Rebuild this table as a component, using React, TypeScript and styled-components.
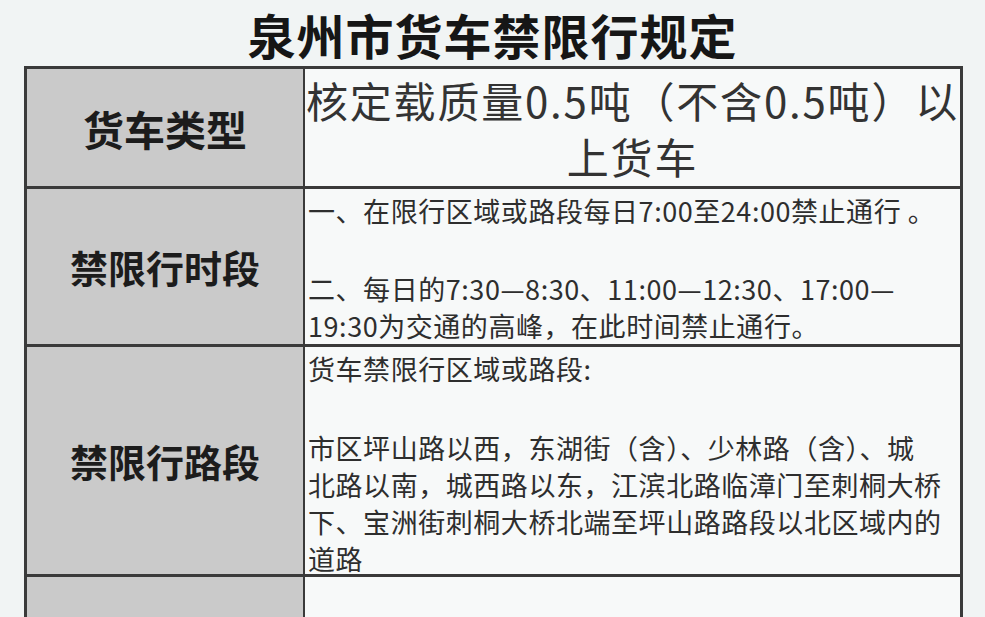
import React from "react";
import styled, { createGlobalStyle } from "styled-components";

const GlobalStyle = createGlobalStyle`
  html, body {
    margin: 0;
    padding: 0;
    background: #f1f4f4;
    overflow: hidden;
  }
  body {
    font-family: "Noto Sans CJK SC", "Noto Sans", sans-serif;
  }
`;

const Page = styled.div`
  width: 985px;
  height: 617px;
  overflow: hidden;
`;

const Title = styled.h1`
  margin: 0;
  padding-top: 4px;
  height: 62px;
  line-height: 60px;
  text-align: center;
  font-size: 48px;
  font-weight: 700;
  color: #161616;
  letter-spacing: 1px;
`;

const Table = styled.div`
  margin-left: 24px;
  width: 939px;
  border: 3px solid #3a3a3a;
  border-bottom: none;
  box-sizing: border-box;
  display: grid;
  grid-template-columns: 278px minmax(0, 1fr);
`;

const Label = styled.div<{ $h: number; $size?: number }>`
  height: ${({ $h }) => $h}px;
  box-sizing: border-box;
  background: #cacaca;
  border-right: 2px solid #3a3a3a;
  border-bottom: 3px solid #3a3a3a;
  display: flex;
  align-items: center;
  justify-content: center;
  font-size: ${({ $size }) => $size ?? 38}px;
  font-weight: 700;
  color: #1c1c1c;
`;

const Cell = styled.div<{ $h: number }>`
  height: ${({ $h }) => $h}px;
  min-width: 0;
  overflow: hidden;
  box-sizing: border-box;
  background: #f7f9f9;
  border-bottom: 3px solid #3a3a3a;
  padding: 3px 4px 0 3px;
  font-size: 27px;
  line-height: 37px;
  letter-spacing: 0.55px;
  color: #2e2e2e;
  white-space: nowrap;
`;

const BigCell = styled(Cell)`
  display: flex;
  align-items: center;
  justify-content: center;
  text-align: center;
  padding: 0 2px;
  font-size: 42px;
  line-height: 56px;
  letter-spacing: 1.8px;
  color: #333;
`;

const Para = styled.p<{ $gap?: number }>`
  margin: 0 0 ${({ $gap }) => $gap ?? 0}px;
`;

export default function App() {
  return (
    <Page>
      <GlobalStyle />
      <Title>泉州市货车禁限行规定</Title>
      <Table>
        <Label $h={120} $size={41}>货车类型</Label>
        <BigCell $h={120}>
          <div>
            核定载质量0.5吨（不含0.5吨）以
            <br />
            上货车
          </div>
        </BigCell>

        <Label $h={158}>禁限行时段</Label>
        <Cell $h={158}>
          <Para $gap={41}>一、在限行区域或路段每日7:00至24:00禁止通行 。</Para>
          <Para>
            二、每日的7:30—8:30、11:00—12:30、17:00—
            <br />
            19:30为交通的高峰，在此时间禁止通行。
          </Para>
        </Cell>

        <Label $h={230}>禁限行路段</Label>
        <Cell $h={230}>
          <Para $gap={42}>货车禁限行区域或路段:</Para>
          <Para>
            市区坪山路以西，东湖街（含）、少林路（含）、城
            <br />
            北路以南，城西路以东，江滨北路临漳门至刺桐大桥
            <br />
            下、宝洲街刺桐大桥北端至坪山路路段以北区域内的
            <br />
            道路
          </Para>
        </Cell>

        <Label $h={100} />
        <Cell $h={100} />
      </Table>
    </Page>
  );
}
